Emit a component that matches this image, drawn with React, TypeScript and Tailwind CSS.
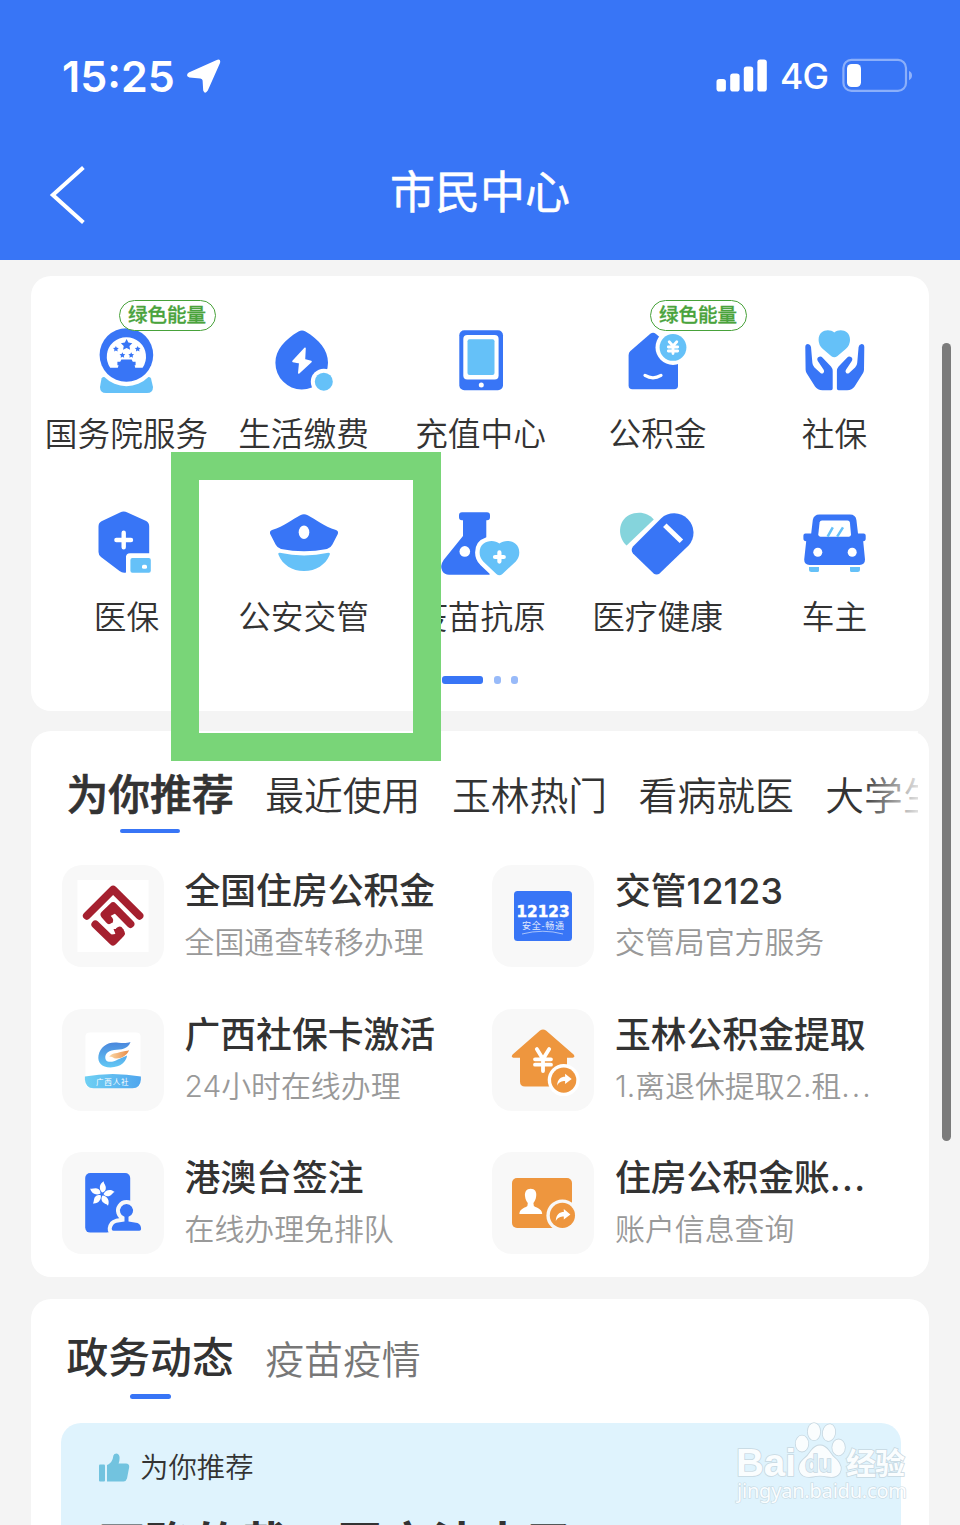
import type { ReactNode } from "react";

const BLUE = "#3875f6";
const SKY = "#65c1f8";
const ORANGE = "#ee963e";

type IconProps = { box: string; className: string; children: ReactNode };

function Icon({ box, className, children }: IconProps) {
  return (
    <svg viewBox={box} className={className} fill={BLUE}>
      {children}
    </svg>
  );
}

function star(cx: number, cy: number, r: number) {
  return Array.from({ length: 10 }, (_, i) => {
    const a = -Math.PI / 2 + (i * Math.PI) / 5;
    const q = i % 2 ? r * 0.5 : r;
    return `${cx + q * Math.cos(a)},${cy + q * Math.sin(a)}`;
  }).join(" ");
}

const hand =
  "M805.3 347 Q805.3 344 808 344 Q810.6 344.3 811 347 L812.4 363 Q812.6 365.5 814.5 367.5 L820.5 373 Q822 374.2 823.4 373 Q824.6 371.5 823.8 370 L817.8 361 Q816.4 358.5 818.6 357 Q820.8 355.8 822.6 357.8 L831 366.5 Q832.7 368.5 832.7 371 V388.5 Q832.7 390.2 831 390.2 H822.5 Q817.5 390 815 386.5 L806.5 373 Q805.6 371.3 805.6 369.5Z";

const services: { label: string; box: string; badge?: boolean; art: ReactNode }[] = [
  {
    label: "国务院服务",
    box: "76 320 100 80",
    badge: true,
    art: (
      <>
        <path fill={SKY} d="M103.5 377 H149 Q150.6 377 151 378.6 L153 387 Q153 393 147 393 H106 Q100 393 100 387 L101.5 378.6 Q102 377 103.5 377Z" />
        <circle cx="126.4" cy="355" r="31.2" fill="#fff" />
        <circle cx="126.4" cy="355" r="26.8" />
        <path fill="#fff" d="M110.2 367.8 A19.6 19.6 0 1 1 142.6 367.8 H135.2 L134.6 365.3 H135.6 V361.8 H132.8 L131.6 359.6 H121.4 L120.2 361.8 H117.4 V365.3 H118.6 L117.8 367.8Z" />
        <polygon points={star(126.6, 345, 6)} />
        <polygon points={star(115.9, 349, 3)} />
        <polygon points={star(137.7, 349, 3)} />
        <polygon points={star(122.4, 355.3, 3)} />
        <polygon points={star(131.2, 355.3, 3)} />
      </>
    ),
  },
  {
    label: "生活缴费",
    box: "253 320 100 80",
    art: (
      <>
        <path d="M298.5 331.6 Q302 329.4 305.5 331.6 C319 339.5 328 350 328 362.8 A26.3 26.6 0 0 1 275.4 362.8 C275.4 350 285 339.5 298.5 331.6Z" />
        <path fill="#fff" stroke="#fff" strokeWidth="1.6" strokeLinejoin="round" d="M305 348.2 L293 361.4 L299.8 362.8 L298.8 373 L311 361.6 L304.4 359.8Z" />
        <circle cx="323.8" cy="381.7" r="13" fill="#fff" />
        <circle cx="323.8" cy="381.7" r="9" fill={SKY} />
      </>
    ),
  },
  {
    label: "充值中心",
    box: "430 320 100 80",
    art: (
      <>
        <rect x="459.3" y="330.3" width="43.7" height="60" rx="5" />
        <rect x="463.3" y="335" width="35.3" height="44.6" rx="4" fill="#fff" />
        <rect x="467.5" y="339.3" width="27" height="35.8" rx="2" fill={SKY} />
        <circle cx="481.3" cy="384.9" r="2.5" fill="#fff" />
      </>
    ),
  },
  {
    label: "公积金",
    box: "607 320 100 80",
    badge: true,
    art: (
      <>
        <path d="M628.6 355 Q628.6 352.6 630.4 351 L650.3 333.8 Q653.2 331.8 656 334 L678 353 V385.5 Q678 389.3 674.2 389.3 H632.4 Q628.6 389.3 628.6 385.5Z" />
        <circle cx="673" cy="347.4" r="17.5" fill="#fff" />
        <circle cx="673" cy="347.4" r="13.4" fill={SKY} />
        <path fill="none" stroke="#fff" strokeWidth="3.2" strokeLinecap="round" d="M645 375.4 Q653 380.2 661 375.4" />
        <path fill="none" stroke="#fff" strokeWidth="2.8" strokeLinecap="round" d="M669.2 341.8 L673 346 L676.8 341.8 M673 346 V353.6 M668.3 347 H677.7 M668.3 351 H677.7" />
      </>
    ),
  },
  {
    label: "社保",
    box: "784 320 100 80",
    art: (
      <>
        <path fill={SKY} d="M834.3 332.6 C839 328.4 850 329.6 850 340 Q850 345 846 348.8 L837.2 356.2 Q834.3 358.4 831.4 356.2 L822.6 348.8 Q818.6 345 818.6 340 C818.6 329.6 829.6 328.4 834.3 332.6Z" />
        <path d={hand} />
        <path d={hand} transform="matrix(-1 0 0 1 1669.6 0)" />
      </>
    ),
  },
  {
    label: "医保",
    box: "76 503 100 80",
    art: (
      <>
        <path d="M98.5 526.5 Q98.5 522.8 101.5 521.3 L120 512.4 Q123.7 510.8 127.4 512.4 L146.2 521 Q149.2 522.8 149.2 526.5 V556 H126 V572.5 Q122.5 573.4 119.5 571 L101 557 Q98.5 555 98.5 552Z" />
        <path fill="#fff" d="M126 575 V557.3 Q126 553.3 130 553.3 H153 V575Z" />
        <rect x="130.4" y="558" width="20.4" height="14.8" rx="2" fill={SKY} />
        <rect x="142" y="564.8" width="5" height="4" rx="1.6" fill="#fff" />
        <path stroke="#fff" strokeWidth="4.4" strokeLinecap="round" d="M116.4 540 H131 M123.7 532.7 V547.3" />
      </>
    ),
  },
  {
    label: "公安交管",
    box: "253 503 100 80",
    art: (
      <>
        <path d="M300.3 515.2 Q304 513.2 307.7 515.2 C316 519.5 323.5 526.2 336 530 Q338.8 531 337.8 534 L332.4 544.6 Q330.8 548 327 549 Q304 553.6 281 549 Q277.2 548 275.6 544.6 L270.2 534 Q269.2 531 272 530 C284.5 526.2 292 519.5 300.3 515.2Z" />
        <ellipse cx="304" cy="532.2" rx="5.3" ry="6.8" fill="#fff" />
        <path fill={SKY} d="M279.8 552.8 Q304 558 328.4 552.8 Q330.6 552.8 329.6 555 C325.6 564.8 316 571 304 571 S282.6 564.8 278.6 555 Q277.6 552.8 279.8 552.8Z" />
      </>
    ),
  },
  {
    label: "疫苗抗原",
    box: "430 503 100 80",
    art: (
      <>
        <path d="M462 512.3 H487 Q490 512.3 490 515.3 V517.2 Q490 520.2 487 520.2 H486.3 V541 L494 560 L489.5 574.8 H449 Q444.5 574.8 442.3 571 Q439.6 566 443.6 560 L463 536 V520.2 H462 Q459 520.2 459 517.2 V515.3 Q459 512.3 462 512.3Z" />
        <path fill={SKY} stroke="#fff" strokeWidth="9" paintOrder="stroke" strokeLinejoin="round" d="M499.4 543.6 C505.5 538.6 519.3 540.6 519.3 552.5 Q519.3 557.8 515.8 561.4 L502.4 574 Q499.4 576.6 496.4 574 L483.2 561.4 Q479.6 557.8 479.6 552.5 C479.6 540.6 493.4 538.6 499.4 543.6Z" />
        <circle cx="464.8" cy="551.4" r="5.3" fill="#fff" />
        <path stroke="#fff" strokeWidth="4.2" strokeLinecap="round" d="M495 557 H503.8 M499.4 552.4 V561.6" />
      </>
    ),
  },
  {
    label: "医疗健康",
    box: "607 503 100 80",
    art: (
      <>
        <path fill="#85d4dc" d="M626.6 545.6 C617.5 537.4 617.4 521.4 629.2 515 C637.6 510.8 648 512.2 653.8 519.4Z" />
        <path d="M633 553.6 Q630.4 550 633 546.4 L661 518.4 A19.4 19.4 0 0 1 688.6 545.6 L659.8 573.2 Q656.6 576 653.4 573.2Z" />
        <path stroke="#fff" strokeWidth="5" d="M664.8 525.2 L681.4 541.2" />
      </>
    ),
  },
  {
    label: "车主",
    box: "784 503 100 80",
    art: (
      <>
        <path d="M819.5 514.5 H850 Q855.6 514.5 856.4 520 L858 533.6 H863.6 Q865.7 533.6 865.7 535.6 V538.5 Q865.7 541.3 863.2 541.3 L865 559.6 Q865 565 859.6 565 H809.6 Q804.2 565 804.2 559.6 L806.2 541.3 Q803.4 541.3 803.4 538.5 V535.6 Q803.4 533.6 805.4 533.6 H811.2 L812.8 520 Q813.8 514.5 819.5 514.5Z" />
        <path fill="#fff" d="M822 520.4 H847.5 Q849.6 520.4 849.9 522.5 L851 534.6 Q851 536.7 849 536.7 H820.4 Q818.3 536.7 818.3 534.6 L819.6 522.5 Q820 520.4 822 520.4Z" />
        <path stroke={SKY} strokeWidth="2.5" d="M827.6 536.7 L832.8 527.4 M837.2 536.7 L843 527.4" />
        <circle cx="817.8" cy="552.3" r="4.5" fill="#fff" />
        <circle cx="852.2" cy="552.3" r="4.5" fill="#fff" />
        <path fill={SKY} d="M809 567 H819 V570.5 Q819 572 817.5 572 H811.5 Q809 572 809 569.5Z M850 567 H860 V569.5 Q860 572 857.5 572 H851.5 Q850 572 850 570.5Z" />
      </>
    ),
  },
];

function ShareDot({ x, y, ring }: { x: number; y: number; ring: string }) {
  return (
    <g transform={`translate(${x} ${y})`}>
      <circle r="16" fill={ring} />
      <circle r="12.6" fill={ORANGE} />
      <path fill="#fff" d="M-6.6 5.6 C-6.4 -1 -2.6 -3.4 1.4 -3.4 V-6.4 L8 -1 L1.4 4 V1 C-2 1 -4.6 2 -6.6 5.6Z" />
    </g>
  );
}

const apps: { title: string; sub: string; moreTitle?: boolean; moreSub?: boolean; box: string; art: ReactNode }[] = [
  {
    title: "全国住房公积金",
    sub: "全国通查转移办理",
    box: "61.5 865 102 102",
    art: (
      <>
        <rect x="77" y="880" width="71" height="72" fill="#fff" />
        <g fill="none" stroke="#a5202f" strokeWidth="7.8" strokeLinejoin="round" strokeLinecap="round">
          <path d="M86.3 915.8 L112.6 889.6 L139 915.8" />
          <path d="M108.6 920 L104 914.6 L112.6 906.2 L130 924" />
          <path d="M94.8 924.4 L112.6 941.6 L120.6 933.4 L119 930.6" />
        </g>
        <path fill="#a5202f" d="M103 911 L112 904 L117.5 912 L110 916 L112.5 922.5 L107 923Z M113 929 L123 929 L121 938 L113 943 L107 935 L115 934Z" />
      </>
    ),
  },
  {
    title: "交管12123",
    sub: "交管局官方服务",
    box: "492 865 102 102",
    art: (
      <>
        <rect x="514" y="891" width="58" height="50" rx="3.5" />
        <text x="516.5" y="917" fill="#fff" stroke="#fff" strokeWidth=".5" fontSize="15.5" textLength="53" lengthAdjust="spacingAndGlyphs" className="font-['DejaVu_Sans',sans-serif] font-bold">12123</text>
        <text x="522" y="928.5" fill="#fff" fontSize="9" textLength="42" opacity=".85" className="font-['Noto_Sans_CJK_SC',sans-serif]">安全-畅通</text>
        <path fill="none" stroke="#fff" strokeWidth=".8" opacity=".7" d="M522 934 Q543 928.5 563 934" />
      </>
    ),
  },
  {
    title: "广西社保卡激活",
    sub: "24小时在线办理",
    box: "61.5 1008.5 102 102",
    art: (
      <>
        <defs>
          <linearGradient id="gx-letter" x1="0" y1="0" x2="0" y2="1">
            <stop offset="0" stopColor="#4a86dc" />
            <stop offset="1" stopColor="#62c8f5" />
          </linearGradient>
          <linearGradient id="gx-banner" x1="0" y1="0" x2="1" y2="0">
            <stop offset="0" stopColor="#6fd0f3" />
            <stop offset="1" stopColor="#4fa6ee" />
          </linearGradient>
          <linearGradient id="gx-flame" x1="0" y1="0" x2="1" y2="0">
            <stop offset="0" stopColor="#fbd9a8" />
            <stop offset="1" stopColor="#e98a45" />
          </linearGradient>
        </defs>
        <rect x="85" y="1032" width="55" height="55" rx="4" fill="#fff" />
        <path fill="url(#gx-banner)" d="M84.4 1076 Q112 1071 140.4 1076 V1079 Q140 1087.6 132 1087.8 H93 Q85 1087.6 84.4 1079Z" />
        <path fill="url(#gx-letter)" d="M130 1041.4 C127.4 1048.6 121 1049 113.6 1049.4 C106.4 1050 103.4 1055 105.4 1059.4 C107.6 1062.6 113 1061.4 117.4 1059 L126.6 1055 C125.4 1061.6 120.6 1066.4 110 1067 C101 1067 96.8 1061.6 98 1055 C100 1045.6 107.6 1040.8 118 1042.2 C124 1042.6 127 1042.4 130 1041.4Z" />
        <path fill="url(#gx-flame)" d="M108.6 1056.6 C111 1052.4 115.6 1053.4 120 1051.6 C123.4 1050.4 126.4 1050.6 128.6 1049.8 C126.4 1055 121 1058.2 115.4 1058 C112 1058 112.4 1055.6 108.6 1056.6Z" />
        <text x="95.5" y="1084" fill="#fff" fontSize="7.5" textLength="32.5" className="font-['Noto_Sans_CJK_SC',sans-serif]">广西人社</text>
      </>
    ),
  },
  {
    title: "玉林公积金提取",
    sub: "1.离退休提取2.租",
    moreSub: true,
    box: "492 1008.5 102 102",
    art: (
      <>
        <path fill={ORANGE} d="M540 1030 Q543 1028 546 1030 L573.6 1054 Q575.6 1056.8 572.6 1057.2 H567 V1086 H525 Q520 1086 520 1081 V1057.2 H513.4 Q510.6 1056.8 512.6 1054Z" />
        <path fill="none" stroke="#fff" strokeWidth="3.8" strokeLinecap="round" d="M536.8 1048.5 L543 1058.6 L549.2 1048.5 M543 1058.6 V1070.5 M535 1058.8 H551 M535 1064.2 H551" />
        <ShareDot x={563.7} y={1079.6} ring="#fff" />
      </>
    ),
  },
  {
    title: "港澳台签注",
    sub: "在线办理免排队",
    box: "61.5 1152 102 102",
    art: (
      <>
        <rect x="84.7" y="1173" width="45" height="59.6" rx="5" />
        <g fill="#fff">
          {[8, 80, 152, 224, 296].map((deg) => (
            <path key={deg} transform={`translate(101.4 1194.2) rotate(${deg})`} d="M0 -1.6 C-3.6 -4 -4.4 -9.6 0 -13 C.2 -10.4 3.8 -8.8 3 -5 C2.4 -3 1.2 -2.2 0 -1.6Z" />
          ))}
        </g>
        <path stroke="#f8f8f8" strokeWidth="8" paintOrder="stroke" strokeLinejoin="round" d="M124 1221.5 V1216.8 A6.5 6.5 0 1 1 128 1216.8 V1221.5 L137 1223 Q140.6 1224.4 140.6 1229 Q140.6 1230.8 138.8 1230.8 H113 Q111 1230.8 111.2 1228.6 Q112 1223.8 116 1222.8Z" />
        <path fill="#f8f8f8" d="M107 1232.6 H143 V1237 H107Z" />
      </>
    ),
  },
  {
    title: "住房公积金账",
    sub: "账户信息查询",
    moreTitle: true,
    box: "492 1152 102 102",
    art: (
      <>
        <rect x="512" y="1178" width="60" height="50" rx="5" fill={ORANGE} />
        <path fill="#fff" d="M530.6 1188.8 C535 1188.8 536.8 1192 536.2 1196 C535.8 1199.6 534.6 1201.6 533.4 1203 Q533.2 1206 535.4 1207 C539.6 1208.4 542 1210.4 542.2 1214 H519.4 C519.6 1210.4 522 1208.4 526 1207 Q528 1206 527.8 1203 C526.6 1201.6 525.4 1199.6 525 1196 C524.6 1192 526.4 1188.8 530.6 1188.8Z" />
        <ShareDot x={562.4} y={1215.4} ring="#f8f8f8" />
      </>
    ),
  },
];

const tabs = ["最近使用", "玉林热门", "看病就医", "大学生"];

export default function App() {
  return (
    <div className="relative flex h-[1525px] w-[960px] flex-col overflow-hidden bg-[#f4f4f4] font-['Inter','Noto_Sans_CJK_SC',sans-serif] text-[#333]">
      <header className="h-[260px] shrink-0 bg-[#3875f6] text-white">
        <div className="flex h-[150px] items-center pl-[62px] pr-[47px]">
          <span className="mt-[2px] w-[113px] whitespace-nowrap text-[43px] font-semibold leading-none">15:25</span>
          <svg viewBox="186 58 36 36" className="ml-[11px] mt-px h-9 w-9" fill="#fff">
            <path d="M216.2 60.2 Q221.2 58.2 220 63 L207.8 90.6 Q205 94.8 203.2 90.4 L202.6 80.6 Q202.4 78.6 200.4 78.4 L189.4 77.6 Q185 75.6 188.8 72.6Z" />
          </svg>
          <svg viewBox="716 58 52 34" className="ml-auto h-[34px] w-[52px]" fill="#fff">
            <rect x="716.5" y="79" width="9.4" height="12.6" rx="2.8" />
            <rect x="730.2" y="73.4" width="9.4" height="18.2" rx="2.8" />
            <rect x="743.8" y="66.4" width="9.4" height="25.2" rx="2.8" />
            <rect x="757.4" y="59.4" width="9.4" height="32.2" rx="2.8" />
          </svg>
          <span className="ml-[12px] mt-[4px] w-[50px] text-[35.5px] font-medium leading-none tracking-[-0.8px]">4G</span>
          <svg viewBox="842 58 71 35" className="ml-[12px] h-[35px] w-[71px]">
            <rect x="843.4" y="59.9" width="62.6" height="31" rx="8" fill="none" stroke="#fff" strokeOpacity=".42" strokeWidth="2.2" />
            <path d="M909 71 Q912 72.4 912 75.6 T909 80.2Z" fill="#fff" fillOpacity=".45" />
            <rect x="847" y="64" width="14" height="23" rx="4.6" fill="#fff" />
          </svg>
        </div>
        <div className="grid h-[90px] grid-cols-3 items-center px-[48px]">
          <svg viewBox="48 165 40 60" className="h-[60px] w-10" fill="none" stroke="#fff" strokeWidth="4">
            <path d="M83.4 167.6 L52.8 195 L83.4 222.4" />
          </svg>
          <h1 className="mt-[-4px] whitespace-nowrap text-center text-[45px] font-normal leading-[54px] [-webkit-text-stroke:0.5px_white]">市民中心</h1>
        </div>
      </header>

      <section className="mx-[31px] mt-4 h-[435px] shrink-0 rounded-[20px] bg-white pl-[6.5px]">
        <div className="grid w-[885px] grid-cols-5 pt-[44px]">
          {services.map((s) => (
            <div key={s.label} className="relative flex h-[183px] flex-col items-center">
              <Icon box={s.box} className="h-20 w-[100px]">{s.art}</Icon>
              <span className="mt-[10px] whitespace-nowrap pl-px text-[32.7px] font-[350] leading-[48px]">{s.label}</span>
              {s.badge && (
                <span className="absolute left-[81px] top-[-20px] flex h-[31px] w-[97px] items-center justify-center rounded-full border border-[#48a23a] bg-white text-[19.5px] font-medium leading-none text-[#4aa33c] [-webkit-text-stroke:0.3px_#4aa33c]">
                  绿色能量
                </span>
              )}
            </div>
          ))}
        </div>
        <div className="mt-[-10px] flex justify-center pr-[6px]">
          <div className="flex gap-[10.5px]">
            <i className="h-2 w-[41px] rounded-[3px] bg-[#3875f6]" />
            <i className="h-2 w-[7px] rounded-[3px] bg-[#98baf9]" />
            <i className="h-2 w-[7px] rounded-[3px] bg-[#98baf9]" />
          </div>
        </div>
      </section>

      <section className="mx-[31px] mt-5 h-[546px] shrink-0 rounded-[20px] bg-white pl-[30px]">
        <div className="relative flex h-[134px] w-[857px] gap-[31px] overflow-hidden whitespace-nowrap pl-[5.5px] pt-[37px]">
          <div className="flex shrink-0 flex-col items-center">
            <span className="text-[41.8px] font-medium leading-[54px] [-webkit-text-stroke:0.7px_#333]">为你推荐</span>
            <i className="mt-[7px] h-1 w-[60px] rounded-full bg-[#3875f6]" />
          </div>
          {tabs.map((t) => (
            <span key={t} className="shrink-0 pl-[0.5px] text-[38.8px] font-[350] leading-[56px]">{t}</span>
          ))}
          <div className="absolute right-0 top-0 h-full w-[58px] bg-gradient-to-r from-white/0 to-white/85" />
        </div>
        <div className="grid grid-cols-[430.5px_400px] gap-y-[41.5px] pl-[0.5px]">
          {apps.map((a) => (
            <div key={a.title} className="flex h-[102px] gap-[21px]">
              <div className="flex h-[102px] w-[102px] shrink-0 rounded-[20px] bg-[#f8f8f8]">
                <Icon box={a.box} className="h-full w-full">{a.art}</Icon>
              </div>
              <div className="whitespace-nowrap">
                <div className="text-[35.8px] font-medium leading-[52px]">
                  {a.title}
                  {a.moreTitle && <span className="tracking-[1.4px]">...</span>}
                </div>
                <div className="text-[29.9px] font-[350] leading-[51px] text-[#999]">
                  {a.sub}
                  {a.moreSub && <span className="tracking-[2px]">...</span>}
                </div>
              </div>
            </div>
          ))}
        </div>
      </section>

      <section className="mx-[31px] mt-[22px] h-[300px] shrink-0 rounded-t-[20px] bg-white px-[30px]">
        <div className="flex h-[124px] gap-[31px] pl-[5.5px] pt-[32px]">
          <div className="flex flex-col items-center">
            <span className="text-[41.8px] font-medium leading-[54px]">政务动态</span>
            <i className="mt-[9px] h-[5px] w-[41px] rounded-full bg-[#3875f6]" />
          </div>
          <span className="pl-[0.5px] pt-px text-[38.9px] font-[350] leading-[56px] text-[#777]">疫苗疫情</span>
        </div>
        <div className="h-[180px] w-[840px] rounded-t-[20px] bg-[#dff3fd] pl-[37px] pt-[22px]">
          <div className="flex items-center gap-[10px]">
            <svg viewBox="98 1452 32 30" className="h-[30px] w-8" fill="#72c3df">
              <rect x="99" y="1463.4" width="6" height="17" rx="1" />
              <path d="M107 1464 Q112.6 1462 113.4 1454.6 Q114 1452.6 116.6 1452.6 Q119.6 1453.2 119.6 1457 Q119.6 1460 118.6 1462.4 H126 Q129.4 1462.6 129.2 1466 L127 1477.6 Q126.2 1480.4 123.6 1480.4 H107Z" />
            </svg>
            <span className="pt-px text-[28.4px] font-[350] leading-[44px]">为你推荐</span>
          </div>
          <div className="mt-[23px] whitespace-nowrap text-[47.6px] font-bold leading-[64px]">正确的戴口罩方法来了?</div>
        </div>
      </section>

      <div className="absolute left-[171px] top-[452px] h-[309px] w-[270px] border-[28px] border-[#79d578]" />
      <div className="absolute left-[942px] top-[343px] h-[798px] w-[9px] rounded-full bg-[#7b7b7b]" />
      <svg viewBox="730 1418 184 90" className="absolute left-[730px] top-[1418px] h-[90px] w-[184px]" fill="#fff" stroke="#c3d3dc" strokeWidth="1.6" paintOrder="stroke" opacity=".85">
        <text x="736" y="1476" fontSize="39" textLength="60" lengthAdjust="spacingAndGlyphs" className="font-['Liberation_Sans',sans-serif] font-bold">Bai</text>
        <ellipse cx="802" cy="1443.6" rx="6.3" ry="8" />
        <ellipse cx="814" cy="1431.6" rx="6.2" ry="8.6" />
        <ellipse cx="829" cy="1432.6" rx="6.2" ry="8.4" transform="rotate(10 829 1432.6)" />
        <ellipse cx="838.6" cy="1447.4" rx="6.3" ry="8" />
        <path d="M820 1445.4 Q825 1445.4 829 1451 Q832 1456 837 1460 Q843 1467 839.6 1473 Q836 1478.4 827 1476.6 Q820 1475 813 1476.6 Q803 1478.4 800 1472 Q797 1465 803.4 1459.4 Q808 1456 811 1451 Q815 1445.4 820 1445.4Z" />
        <text x="805" y="1472" fontSize="24" fill="#dceef7" strokeWidth="1.4" textLength="27" lengthAdjust="spacingAndGlyphs" className="font-['Liberation_Sans',sans-serif] font-bold">du</text>
        <text x="846" y="1474" fontSize="30" textLength="59" className="font-['Noto_Sans_CJK_SC',sans-serif] font-bold">经验</text>
        <text x="737" y="1498" fontSize="20" textLength="170" strokeWidth="1.2" className="font-['Noto_Sans',sans-serif]">jingyan.baidu.com</text>
      </svg>
    </div>
  );
}
